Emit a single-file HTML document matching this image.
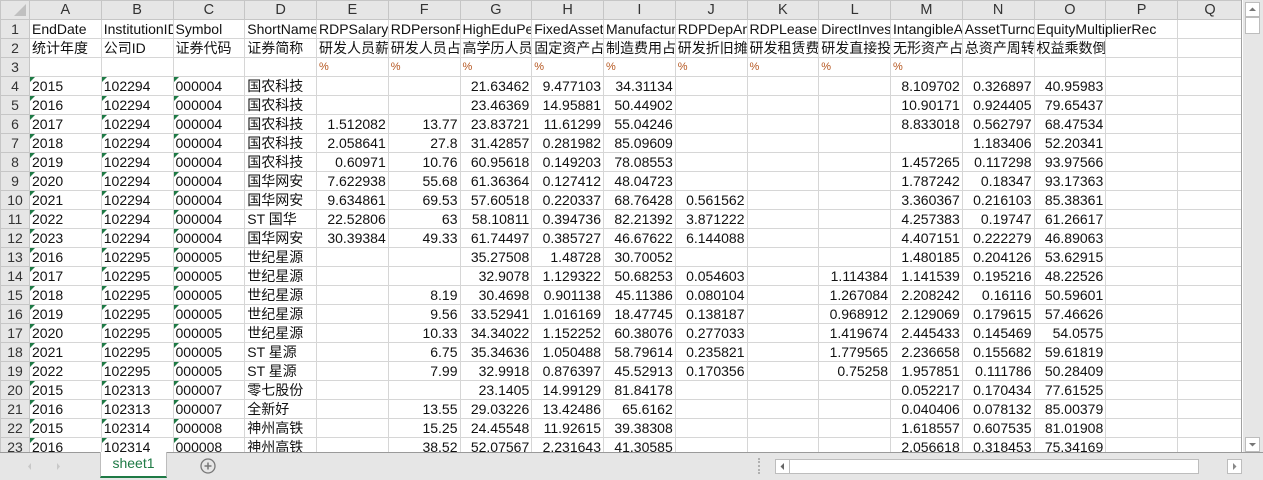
<!DOCTYPE html>
<html><head><meta charset="utf-8"><style>
*{margin:0;padding:0;box-sizing:border-box}
body{width:1263px;height:480px;overflow:hidden;background:#fff;font-family:"Liberation Sans","Noto Sans CJK SC",sans-serif;font-size:14px;color:#111;position:relative}
#grid{position:absolute;left:0;top:0;width:1242px;height:452px;overflow:hidden;border-right:1px solid #a0a0a0}
table{border-collapse:collapse;table-layout:fixed;width:1242px}
td{border:1px solid #d6d6d6;height:19px;white-space:nowrap;overflow:hidden;padding:0 2px;vertical-align:bottom;line-height:17px;position:relative}
tr.h td{background:#e6e6e6;color:#333;text-align:center;height:19px;border-color:#c6c6c6;font-size:14.5px}
td.rh{background:#e6e6e6;color:#333;text-align:center;border-color:#c6c6c6;padding:0}
td.n{text-align:right}
td.g::before{content:"";position:absolute;left:0;top:0;border-top:5px solid #1e7a45;border-right:5px solid transparent}
td.p{color:#b5561f;font-size:11px}
td.v{overflow:visible}
#bot{position:absolute;left:0;top:452px;width:1263px;height:28px;background:#e6e6e6;border-top:1px solid #9a9a9a}
#vs{position:absolute;left:1243px;top:0;width:20px;height:452px;background:#e6e6e6}
.btn{position:absolute;background:#fff;border:1px solid #bdbdbd}
</style></head><body>
<div id="grid"><table>
<colgroup><col style="width:29px"><col span="16" style="width:71.75px"><col style="width:65px"></colgroup>
<tr class="h"><td style="background:#e6e6e6"><svg width="14" height="14" style="position:absolute;right:2px;bottom:2px"><path d="M13 1V13H1Z" fill="#c0c0c0"/></svg></td><td>A</td><td>B</td><td>C</td><td>D</td><td>E</td><td>F</td><td>G</td><td>H</td><td>I</td><td>J</td><td>K</td><td>L</td><td>M</td><td>N</td><td>O</td><td>P</td><td>Q</td></tr>
<tr><td class="rh">1</td><td>EndDate</td><td>InstitutionID</td><td>Symbol</td><td>ShortName</td><td>RDPSalaryRatio</td><td>RDPersonRatio</td><td>HighEduPersonRatio</td><td>FixedAssetRatio</td><td>ManufactureRatio</td><td>RDPDepAmort</td><td>RDPLeaseCost</td><td>DirectInvestRatio</td><td>IntangibleAssetRatio</td><td>AssetTurnover</td><td class="v">EquityMultiplierRec</td><td></td><td></td></tr>
<tr><td class="rh">2</td><td>统计年度</td><td>公司ID</td><td>证券代码</td><td>证券简称</td><td>研发人员薪酬占比</td><td>研发人员占比</td><td>高学历人员占比</td><td>固定资产占比</td><td>制造费用占比</td><td>研发折旧摊销</td><td>研发租赁费用</td><td>研发直接投入</td><td>无形资产占比</td><td>总资产周转率</td><td>权益乘数倒数</td><td></td><td></td></tr>
<tr><td class="rh">3</td><td></td><td></td><td></td><td></td><td class="p">%</td><td class="p">%</td><td class="p">%</td><td class="p">%</td><td class="p">%</td><td class="p">%</td><td class="p">%</td><td class="p">%</td><td class="p">%</td><td></td><td></td><td></td><td></td></tr>
<tr><td class="rh">4</td><td class="g">2015</td><td class="g">102294</td><td class="g">000004</td><td>国农科技</td><td></td><td></td><td class="n">21.63462</td><td class="n">9.477103</td><td class="n">34.31134</td><td></td><td></td><td></td><td class="n">8.109702</td><td class="n">0.326897</td><td class="n">40.95983</td><td></td><td></td></tr>
<tr><td class="rh">5</td><td class="g">2016</td><td class="g">102294</td><td class="g">000004</td><td>国农科技</td><td></td><td></td><td class="n">23.46369</td><td class="n">14.95881</td><td class="n">50.44902</td><td></td><td></td><td></td><td class="n">10.90171</td><td class="n">0.924405</td><td class="n">79.65437</td><td></td><td></td></tr>
<tr><td class="rh">6</td><td class="g">2017</td><td class="g">102294</td><td class="g">000004</td><td>国农科技</td><td class="n">1.512082</td><td class="n">13.77</td><td class="n">23.83721</td><td class="n">11.61299</td><td class="n">55.04246</td><td></td><td></td><td></td><td class="n">8.833018</td><td class="n">0.562797</td><td class="n">68.47534</td><td></td><td></td></tr>
<tr><td class="rh">7</td><td class="g">2018</td><td class="g">102294</td><td class="g">000004</td><td>国农科技</td><td class="n">2.058641</td><td class="n">27.8</td><td class="n">31.42857</td><td class="n">0.281982</td><td class="n">85.09609</td><td></td><td></td><td></td><td></td><td class="n">1.183406</td><td class="n">52.20341</td><td></td><td></td></tr>
<tr><td class="rh">8</td><td class="g">2019</td><td class="g">102294</td><td class="g">000004</td><td>国农科技</td><td class="n">0.60971</td><td class="n">10.76</td><td class="n">60.95618</td><td class="n">0.149203</td><td class="n">78.08553</td><td></td><td></td><td></td><td class="n">1.457265</td><td class="n">0.117298</td><td class="n">93.97566</td><td></td><td></td></tr>
<tr><td class="rh">9</td><td class="g">2020</td><td class="g">102294</td><td class="g">000004</td><td>国华网安</td><td class="n">7.622938</td><td class="n">55.68</td><td class="n">61.36364</td><td class="n">0.127412</td><td class="n">48.04723</td><td></td><td></td><td></td><td class="n">1.787242</td><td class="n">0.18347</td><td class="n">93.17363</td><td></td><td></td></tr>
<tr><td class="rh">10</td><td class="g">2021</td><td class="g">102294</td><td class="g">000004</td><td>国华网安</td><td class="n">9.634861</td><td class="n">69.53</td><td class="n">57.60518</td><td class="n">0.220337</td><td class="n">68.76428</td><td class="n">0.561562</td><td></td><td></td><td class="n">3.360367</td><td class="n">0.216103</td><td class="n">85.38361</td><td></td><td></td></tr>
<tr><td class="rh">11</td><td class="g">2022</td><td class="g">102294</td><td class="g">000004</td><td>ST 国华</td><td class="n">22.52806</td><td class="n">63</td><td class="n">58.10811</td><td class="n">0.394736</td><td class="n">82.21392</td><td class="n">3.871222</td><td></td><td></td><td class="n">4.257383</td><td class="n">0.19747</td><td class="n">61.26617</td><td></td><td></td></tr>
<tr><td class="rh">12</td><td class="g">2023</td><td class="g">102294</td><td class="g">000004</td><td>国华网安</td><td class="n">30.39384</td><td class="n">49.33</td><td class="n">61.74497</td><td class="n">0.385727</td><td class="n">46.67622</td><td class="n">6.144088</td><td></td><td></td><td class="n">4.407151</td><td class="n">0.222279</td><td class="n">46.89063</td><td></td><td></td></tr>
<tr><td class="rh">13</td><td class="g">2016</td><td class="g">102295</td><td class="g">000005</td><td>世纪星源</td><td></td><td></td><td class="n">35.27508</td><td class="n">1.48728</td><td class="n">30.70052</td><td></td><td></td><td></td><td class="n">1.480185</td><td class="n">0.204126</td><td class="n">53.62915</td><td></td><td></td></tr>
<tr><td class="rh">14</td><td class="g">2017</td><td class="g">102295</td><td class="g">000005</td><td>世纪星源</td><td></td><td></td><td class="n">32.9078</td><td class="n">1.129322</td><td class="n">50.68253</td><td class="n">0.054603</td><td></td><td class="n">1.114384</td><td class="n">1.141539</td><td class="n">0.195216</td><td class="n">48.22526</td><td></td><td></td></tr>
<tr><td class="rh">15</td><td class="g">2018</td><td class="g">102295</td><td class="g">000005</td><td>世纪星源</td><td></td><td class="n">8.19</td><td class="n">30.4698</td><td class="n">0.901138</td><td class="n">45.11386</td><td class="n">0.080104</td><td></td><td class="n">1.267084</td><td class="n">2.208242</td><td class="n">0.16116</td><td class="n">50.59601</td><td></td><td></td></tr>
<tr><td class="rh">16</td><td class="g">2019</td><td class="g">102295</td><td class="g">000005</td><td>世纪星源</td><td></td><td class="n">9.56</td><td class="n">33.52941</td><td class="n">1.016169</td><td class="n">18.47745</td><td class="n">0.138187</td><td></td><td class="n">0.968912</td><td class="n">2.129069</td><td class="n">0.179615</td><td class="n">57.46626</td><td></td><td></td></tr>
<tr><td class="rh">17</td><td class="g">2020</td><td class="g">102295</td><td class="g">000005</td><td>世纪星源</td><td></td><td class="n">10.33</td><td class="n">34.34022</td><td class="n">1.152252</td><td class="n">60.38076</td><td class="n">0.277033</td><td></td><td class="n">1.419674</td><td class="n">2.445433</td><td class="n">0.145469</td><td class="n">54.0575</td><td></td><td></td></tr>
<tr><td class="rh">18</td><td class="g">2021</td><td class="g">102295</td><td class="g">000005</td><td>ST 星源</td><td></td><td class="n">6.75</td><td class="n">35.34636</td><td class="n">1.050488</td><td class="n">58.79614</td><td class="n">0.235821</td><td></td><td class="n">1.779565</td><td class="n">2.236658</td><td class="n">0.155682</td><td class="n">59.61819</td><td></td><td></td></tr>
<tr><td class="rh">19</td><td class="g">2022</td><td class="g">102295</td><td class="g">000005</td><td>ST 星源</td><td></td><td class="n">7.99</td><td class="n">32.9918</td><td class="n">0.876397</td><td class="n">45.52913</td><td class="n">0.170356</td><td></td><td class="n">0.75258</td><td class="n">1.957851</td><td class="n">0.111786</td><td class="n">50.28409</td><td></td><td></td></tr>
<tr><td class="rh">20</td><td class="g">2015</td><td class="g">102313</td><td class="g">000007</td><td>零七股份</td><td></td><td></td><td class="n">23.1405</td><td class="n">14.99129</td><td class="n">81.84178</td><td></td><td></td><td></td><td class="n">0.052217</td><td class="n">0.170434</td><td class="n">77.61525</td><td></td><td></td></tr>
<tr><td class="rh">21</td><td class="g">2016</td><td class="g">102313</td><td class="g">000007</td><td>全新好</td><td></td><td class="n">13.55</td><td class="n">29.03226</td><td class="n">13.42486</td><td class="n">65.6162</td><td></td><td></td><td></td><td class="n">0.040406</td><td class="n">0.078132</td><td class="n">85.00379</td><td></td><td></td></tr>
<tr><td class="rh">22</td><td class="g">2015</td><td class="g">102314</td><td class="g">000008</td><td>神州高铁</td><td></td><td class="n">15.25</td><td class="n">24.45548</td><td class="n">11.92615</td><td class="n">39.38308</td><td></td><td></td><td></td><td class="n">1.618557</td><td class="n">0.607535</td><td class="n">81.01908</td><td></td><td></td></tr>
<tr><td class="rh">23</td><td class="g">2016</td><td class="g">102314</td><td class="g">000008</td><td>神州高铁</td><td></td><td class="n">38.52</td><td class="n">52.07567</td><td class="n">2.231643</td><td class="n">41.30585</td><td></td><td></td><td></td><td class="n">2.056618</td><td class="n">0.318453</td><td class="n">75.34169</td><td></td><td></td></tr>
<tr><td class="rh">24</td><td></td><td></td><td></td><td></td><td></td><td></td><td></td><td></td><td></td><td></td><td></td><td></td><td></td><td></td><td></td><td></td><td></td></tr>
</table></div>
<div id="vs">
<div class="btn" style="left:2px;top:2px;width:15px;height:15px"><svg width="13" height="13" style="position:absolute;left:0;top:0"><path d="M3 8L6.5 4.5L10 8Z" fill="#777"/></svg></div>
<div class="btn" style="left:2px;top:17px;width:15px;height:17px"></div>
<div class="btn" style="left:2px;top:437px;width:15px;height:15px"><svg width="13" height="13" style="position:absolute;left:0;top:0"><path d="M3 5L6.5 8.5L10 5Z" fill="#777"/></svg></div>
</div>
<div id="bot">
<svg width="80" height="27" style="position:absolute;left:20px;top:0"><path d="M11 10L8 13.5L11 17Z" fill="#c8c8c8"/><path d="M37 10L40 13.5L37 17Z" fill="#c8c8c8"/></svg>
<div style="position:absolute;left:100px;top:-1px;width:67px;height:26px;background:#fff;border-left:1px solid #bdbdbd;border-right:1px solid #bdbdbd;border-bottom:2px solid #1e7a45;color:#1e7a45;text-align:center;line-height:22px;font-size:14px">sheet1</div>
<svg width="18" height="18" style="position:absolute;left:199px;top:4px"><circle cx="9" cy="9" r="7" fill="none" stroke="#777" stroke-width="1.3"/><path d="M9 5.5V12.5M5.5 9H12.5" stroke="#777" stroke-width="1.5"/></svg>
<div style="position:absolute;left:758px;top:5px;width:2px;height:16px;border-left:2px dotted #b0b0b0"></div>
<div class="btn" style="left:775px;top:6px;width:424px;height:15px"></div>
<div class="btn" style="left:775px;top:6px;width:15px;height:15px"><svg width="13" height="13" style="position:absolute;left:0;top:0"><path d="M8 3L4.5 6.5L8 10Z" fill="#666"/></svg></div>
<div class="btn" style="left:1227px;top:6px;width:15px;height:15px"><svg width="13" height="13" style="position:absolute;left:0;top:0"><path d="M5 3L8.5 6.5L5 10Z" fill="#888"/></svg></div>
</div>
</body></html>
